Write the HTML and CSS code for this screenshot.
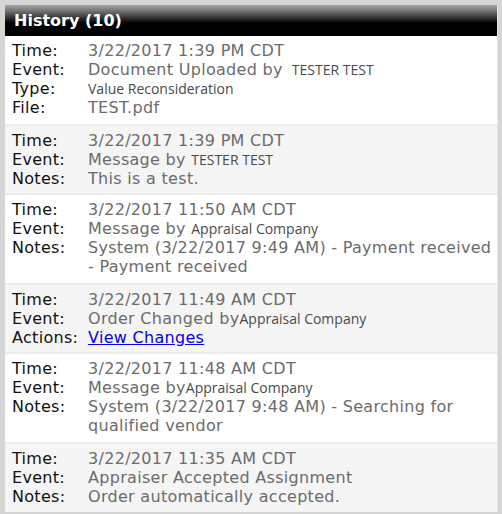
FILE: index.html
```html
<!DOCTYPE html>
<html>
<head>
<meta charset="utf-8">
<link rel="stylesheet" href="styles.css">
</head>
<body>
<div class="panel">
  <div class="header">History (10)</div>
  <div class="entry first">
    <div class="lbl">Time:</div><div class="val">3/22/2017 1:39 PM CDT</div>
    <div class="lbl">Event:</div><div class="val">Document Uploaded by <span class="sm">&nbsp;TESTER TEST</span></div>
    <div class="lbl">Type:</div><div class="val"><span class="sm">Value Reconsideration</span></div>
    <div class="lbl">File:</div><div class="val">TEST.pdf</div>
  </div>
  <div class="entry alt">
    <div class="lbl">Time:</div><div class="val">3/22/2017 1:39 PM CDT</div>
    <div class="lbl">Event:</div><div class="val">Message by <span class="sm">TESTER TEST</span></div>
    <div class="lbl">Notes:</div><div class="val">This is a test.</div>
  </div>
  <div class="entry">
    <div class="lbl">Time:</div><div class="val">3/22/2017 11:50 AM CDT</div>
    <div class="lbl">Event:</div><div class="val">Message by <span class="sm">Appraisal Company</span></div>
    <div class="lbl">Notes:</div><div class="val">System (3/22/2017 9:49 AM) - Payment received - Payment received</div>
  </div>
  <div class="entry alt">
    <div class="lbl">Time:</div><div class="val">3/22/2017 11:49 AM CDT</div>
    <div class="lbl">Event:</div><div class="val">Order Changed by<span class="sm">Appraisal Company</span></div>
    <div class="lbl">Actions:</div><div class="val"><a href="#" class="link">View Changes</a></div>
  </div>
  <div class="entry">
    <div class="lbl">Time:</div><div class="val">3/22/2017 11:48 AM CDT</div>
    <div class="lbl">Event:</div><div class="val">Message by<span class="sm">Appraisal Company</span></div>
    <div class="lbl">Notes:</div><div class="val">System (3/22/2017 9:48 AM) - Searching for qualified vendor</div>
  </div>
  <div class="entry alt last">
    <div class="lbl">Time:</div><div class="val">3/22/2017 11:35 AM CDT</div>
    <div class="lbl">Event:</div><div class="val">Appraiser Accepted Assignment</div>
    <div class="lbl">Notes:</div><div class="val">Order automatically accepted.</div>
  </div>
</div>
</body>
</html>
```
FILE: styles.css
```css
html, body {
  margin: 0;
  padding: 0;
}
body {
  background: #d5d5d5;
  width: 502px;
  height: 514px;
  overflow: hidden;
  font-family: "DejaVu Sans", Verdana, sans-serif;
}
.panel {
  margin: 5px 5px 0 5px;
  width: 492px;
  background: #fff;
  border-right: 1px solid #e6e6e6;
}
.header {
  height: 31px;
  box-sizing: border-box;
  padding: 6px 0 0 9px;
  background: linear-gradient(to bottom, #a5a5a5 0px, #6a6a6a 7px, #1e1e1e 15px, #000 18px, #000 31px);
  color: #fff;
  font-weight: bold;
  font-size: 16px;
  line-height: 19px;
}
.entry {
  display: grid;
  grid-template-columns: 76px 1fr;
  padding: 5px 0 7px 7px;
  border-top: 2px solid #ececec;
  font-size: 16px;
  line-height: 19px;
  letter-spacing: 0.3px;
  background: #fff;
}
.entry.first {
  border-top: none;
}
.entry.alt {
  background: #f5f5f5;
  padding-bottom: 5px;
}
.entry.last {
  padding-bottom: 6px;
}
.lbl {
  color: #111;
}
.val {
  color: #6b6b6b;
}
.sm {
  font-family: "Open Sans", "Noto Sans", sans-serif;
  font-size: 14px;
  letter-spacing: 0;
  color: #4a4a4a;
}
.link {
  color: #0000ee;
  text-decoration: underline;
}
```
